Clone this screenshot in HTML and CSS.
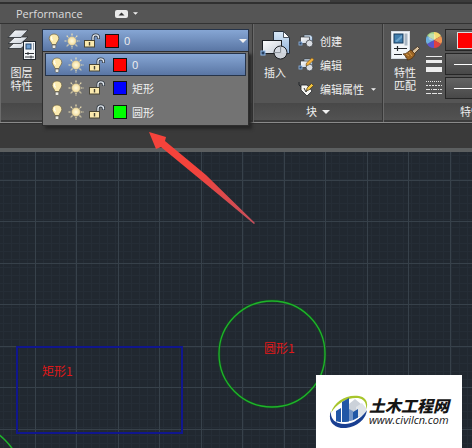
FILE: index.html
```html
<!DOCTYPE html>
<html lang="zh-CN">
<head>
<meta charset="utf-8">
<meta name="viewport" content="width=device-width, initial-scale=1">
<title>图层特性</title>
<link rel="stylesheet" href="styles.css">
</head>
<body>
<svg class="defs" aria-hidden="true">
  <defs>
    <linearGradient id="paper" x1="0" y1="0" x2="1" y2="1"><stop offset="0" stop-color="#fff"/><stop offset="1" stop-color="#c3cbd6"/></linearGradient>
    <linearGradient id="sheet" x1="0" y1="0" x2="0" y2="1"><stop offset="0" stop-color="#d9e9f8"/><stop offset="1" stop-color="#8fb2da"/></linearGradient>
    <radialGradient id="glow"><stop offset="0" stop-color="#fffbe0"/><stop offset="1" stop-color="#f3dc9c"/></radialGradient>
  </defs>
  <symbol id="bulb" viewBox="0 0 12 16">
    <path d="M6 1C3 1 1.200 3 1.200 5.500c0 2.200 2.300 3.500 2.800 6h4c.5-2.500 2.800-3.800 2.800-6C10.800 3 9 1 6 1z" fill="#fbeaae" stroke="#6b6245" stroke-width=".7"/>
    <path d="M4 3.500c-1 1-.8 2.500.6 4" fill="none" stroke="#fffef0" stroke-width="1.300"/>
    <path d="M4.200 12h3.600v2.200L7 15.500H5l-.8-1.300z" fill="#e8e8e2" stroke="#55534a" stroke-width=".6"/>
  </symbol>
  <symbol id="sun" viewBox="0 0 16 16">
    <path d="M8 .5v2.500M8 13v2.500M.5 8H3M13 8h2.500M2.700 2.700l1.800 1.800M11.500 11.500l1.800 1.800M13.300 2.700l-1.800 1.800M4.500 11.500l-1.800 1.800" stroke="#f0e2b4" stroke-width="1.200" stroke-dasharray="1.500 .5"/>
    <circle cx="8" cy="8" r="4.200" fill="url(#glow)" stroke="#c9b98b" stroke-width=".5"/>
  </symbol>
  <symbol id="lock" viewBox="0 0 16 16">
    <path d="M9 8V4.500C9 1 14.500 1 14.500 4.500V6" fill="none" stroke="#313a44" stroke-width="3"/>
    <path d="M9 8V4.500C9 1 14.500 1 14.500 4.500V5.500" fill="none" stroke="#e4eaf0" stroke-width="1.400"/>
    <rect x=".5" y="7.500" width="10" height="6.500" fill="#fbeaae" stroke="#4a4636"/>
    <path d="M5.500 9v3.500" stroke="#4a4636" stroke-width="1.400"/>
  </symbol>
  <symbol id="caret" viewBox="0 0 8 4"><path d="M0 0h8L4 4z" fill="#f0f0f0"/></symbol>
  <symbol id="blocks" viewBox="0 0 16 16">
    <path d="M6 2h6.500l2 2v6H6z" fill="url(#sheet)" stroke="#333c48" stroke-width=".6"/>
    <rect x="2.500" y="4" width="9" height="6.500" fill="url(#paper)" stroke="#303338" stroke-width=".7"/>
    <rect x="1" y="9" width="3" height="3" fill="#314b6e" stroke="#91b8e6" stroke-width=".8"/>
    <circle cx="11.500" cy="10.500" r="3.400" fill="#d9dde3" stroke="#303338" stroke-width=".7"/>
  </symbol>
</svg>

<div class="strip"></div>
<nav class="tabs">
  <a class="tab" href="#performance">Performance</a>
  <button class="minimize" type="button" aria-label="最小化功能区">
    <svg width="13" height="8" viewBox="0 0 13 8"><rect width="13" height="8" rx="2" fill="#e9e9e9"/><path d="M3.500 5.500h6l-3-3z" fill="#333"/></svg>
    <svg width="5" height="3"><use href="#caret"/></svg>
  </button>
</nav>

<main class="ribbon">
  <section class="panel layers">
    <div class="tools">
      <button class="big" type="button">
        <svg width="30" height="32" viewBox="0 0 30 32">
          <g stroke="#2b2f34" stroke-width=".8" fill="url(#paper)">
            <path d="M1 19.500 8 13h13l-7 6.500z"/><path d="M1 14.500 8 8h13l-7 6.500z"/><path d="M1 8.500 8 1h13l-7 7.500z" />
          </g>
          <rect x="16.500" y="12.500" width="12" height="18" fill="#f2f5f8" stroke="#20262d"/>
          <rect x="19" y="15" width="5" height="5" fill="#6f9fd2" stroke="#28486c"/>
          <path d="M26.500 14v7" stroke="#8a97a5"/>
          <path d="M18 24.500h9M18 28h9M21 23v3M24 26.500v3" stroke="#2c3036"/>
        </svg>
        <span>图层<br>特性</span>
      </button>
      <div class="picker">
        <button class="current" type="button" aria-haspopup="listbox" aria-expanded="true">
          <svg width="12" height="16"><use href="#bulb"/></svg>
          <svg width="16" height="16"><use href="#sun"/></svg>
          <svg width="16" height="16"><use href="#lock"/></svg>
          <i class="swatch red"></i><span>0</span>
          <svg class="drop" width="8" height="4"><use href="#caret"/></svg>
        </button>
        <ul class="menu" role="listbox" aria-label="图层">
          <li class="layer selected" role="option" aria-selected="true">
            <svg width="12" height="16"><use href="#bulb"/></svg>
            <svg width="16" height="16"><use href="#sun"/></svg>
            <svg width="16" height="16"><use href="#lock"/></svg>
            <i class="swatch red"></i><span>0</span>
          </li>
          <li class="layer" role="option" aria-selected="false">
            <svg width="12" height="16"><use href="#bulb"/></svg>
            <svg width="16" height="16"><use href="#sun"/></svg>
            <svg width="16" height="16"><use href="#lock"/></svg>
            <i class="swatch blue"></i><span>矩形</span>
          </li>
          <li class="layer" role="option" aria-selected="false">
            <svg width="12" height="16"><use href="#bulb"/></svg>
            <svg width="16" height="16"><use href="#sun"/></svg>
            <svg width="16" height="16"><use href="#lock"/></svg>
            <i class="swatch green"></i><span>圆形</span>
          </li>
        </ul>
      </div>
    </div>
    <div class="title"></div>
  </section>

  <section class="panel block">
    <div class="tools">
      <button class="big" type="button">
        <svg width="30" height="32" viewBox="0 0 30 32">
          <path d="M13.500 2.500h10l6 6v16h-16z" fill="url(#sheet)" stroke="#26303d"/>
          <path d="M23.500 2.500v6h6z" fill="#fff" stroke="#26303d" stroke-width=".8"/>
          <rect x="2.500" y="11.500" width="19" height="13" fill="url(#paper)" stroke="#1d2024"/>
          <rect x="1" y="22" width="4" height="4" fill="#29405f" stroke="#8fb9ea"/>
          <circle cx="20.500" cy="23.500" r="6.500" fill="#d5dae1" fill-opacity=".95" stroke="#1d2024"/>
          <path d="M20.500 17.500v6H14.500" fill="none" stroke="#8f979f"/>
        </svg>
        <span>插入</span>
      </button>
      <div class="commands">
        <button type="button"><svg width="16" height="16"><use href="#blocks"/></svg>创建</button>
        <button type="button">
          <svg width="16" height="16"><use href="#blocks"/><path d="M8.500 6 14 .8l2 2L10.500 8l-2.500.5z" fill="#f2b23e" stroke="#6d4914" stroke-width=".6"/></svg>编辑</button>
        <button type="button">
          <svg width="16" height="16" viewBox="0 0 16 16"><path d="M1 1v3l2 2" stroke="#22262b" fill="none"/><path d="M3 4h6l5 6-5 5-6-6z" fill="#f5f5f2" stroke="#24272b" stroke-width=".8"/><path d="M6 7l2 4 2-3" fill="none" stroke="#333"/><path d="m9 7 4.500-4.500 2 2L11 9l-2.500.5z" fill="#f2c43e" stroke="#46351a" stroke-width=".7"/></svg>编辑属性
          <svg class="more" width="5" height="3"><use href="#caret"/></svg></button>
      </div>
    </div>
    <button class="title" type="button">块<svg width="8" height="4"><use href="#caret"/></svg></button>
  </section>

  <section class="panel properties">
    <div class="tools">
      <button class="big" type="button">
        <svg width="30" height="32" viewBox="0 0 30 32">
          <rect x="1.500" y="2.500" width="18" height="27" fill="#f3f6f9" stroke="#d5dbe2"/>
          <rect x="4" y="5" width="9" height="9" fill="#427fae" stroke="#173a5c"/>
          <path d="M5 12 12 6v3l-5 4z" fill="#6ca4cc"/>
          <rect x="14.500" y="4.500" width="3" height="12" fill="#a9b6c3"/>
          <path d="M4 19.500h13M4 25.500h8M7.500 17v5" stroke="#25292e" stroke-width="1.200"/>
          <path d="m22 22 5.500-4.500 2 2L24 25z" fill="#d9c2a0" stroke="#3f2c1b" stroke-width=".8"/>
          <path d="M13 25c4 0 5-3 8-4l4 4c-1 3-4 6-8 6 1-1 0-2-1-2 0-1-1-3-3-4z" fill="#9b6424" stroke="#4a2d10" stroke-width=".7"/>
          <path d="m16 25 3 2m0-4 3 4" stroke="#d69b4a"/>
        </svg>
        <span>特性<br>匹配</span>
      </button>
      <div class="settings">
        <svg width="16" height="16" viewBox="-8 -8 16 16" aria-hidden="true">
          <path d="M0 0-7-4A8 8 0 0 1 0-8z" fill="#9ccf83"/><path d="M0 0V-8A8 8 0 0 1 7-4z" fill="#f3db70"/><path d="M0 0 7-4A8 8 0 0 1 7 4z" fill="#f09552"/><path d="M0 0 7 4A8 8 0 0 1 0 8z" fill="#df4141"/><path d="M0 0V8A8 8 0 0 1-7 4z" fill="#5a54cb"/><path d="M0 0-7 4A8 8 0 0 1-7-4z" fill="#6cb0e0"/><circle cx="-2" cy="-3" r="3.500" fill="#fff" opacity=".35"/>
        </svg>
        <button class="field" type="button" aria-label="对象颜色"><i class="color"></i></button>
        <svg width="16" height="18" viewBox="0 0 16 18" aria-hidden="true"><path d="M0 1h16v1H0zM0 5h16v3H0zM0 12h16v5H0z" fill="#ededed"/></svg>
        <button class="field" type="button" aria-label="线宽"><i class="line"></i></button>
        <svg width="16" height="16" viewBox="0 0 16 16" aria-hidden="true"><g stroke="#e4e4e4"><path d="M0 1.500h16" stroke-dasharray="1 1"/><path d="M0 5.500h16" stroke-dasharray="2 1"/><path d="M0 9.500h16" stroke-dasharray="4 1 1 1"/><path d="M0 13.500h16" stroke-dasharray="5 1"/></g></svg>
        <button class="field" type="button" aria-label="线型"><i class="line"></i></button>
      </div>
    </div>
    <button class="title" type="button">特性</button>
  </section>
</main>

<div class="gap"></div>

<section class="canvas">
  <svg class="drawing" width="100%" height="100%">
    <defs>
      <pattern id="minor" width="8" height="8" patternUnits="userSpaceOnUse"><path d="M3.500 0v8M0 3.500h8" stroke="#252d36"/></pattern>
      <pattern id="major" width="83" height="83" patternUnits="userSpaceOnUse"><path d="M35.500 0v83M76.500 0v83M0 28.500h83M0 69.500h83" stroke="#37414a"/></pattern>
    </defs>
    <rect width="100%" height="100%" fill="url(#minor)"/>
    <rect width="100%" height="100%" fill="url(#major)"/>
    <rect x="17" y="195" width="165" height="86" fill="none" stroke="#10168e" stroke-width="2"/>
    <circle cx="272" cy="202" r="53" fill="none" stroke="#0b5a18" stroke-width="3" opacity=".5"/>
    <circle cx="272" cy="202" r="53" fill="none" stroke="#1fb42a" stroke-width="1.300"/>
    <circle cx="-41" cy="334" r="65" fill="none" stroke="#1fb42a" stroke-width="1.500"/>
    <text x="42" y="224">矩形1</text>
    <text x="264" y="201">圆形1</text>
  </svg>
  <aside class="brand">
    <svg width="40" height="34" viewBox="0 0 40 34" aria-hidden="true">
      <path d="M2 18C5 6 18-1 30 1c7 1 10 7 7 14 1-7-2-11-8-12C19 2 8 8 2 18z" fill="#a8c62c"/>
      <path d="M20 9l6-5 6 5v13H20z" fill="#cbd1d9"/><path d="M27 12l6-4 4 5v8H27z" fill="#dfe3e8"/>
      <path d="M7 16l5-3v14H7zM13 7l7-4v24h-7zM24 17l5-3v10l-5 2z" fill="#2157a6"/><path d="M20 14l4 2v10h-4z" fill="#7495c6"/>
      <path d="M2 16c-1 9 6 14 15 12 9-1 17-6 21-13-1 9-10 17-21 18C5 34-2 26 2 16z" fill="#193f91"/>
      <path d="M5 25c9 5 20 1 28-5-6 8-18 13-28 5z" fill="#fff"/>
    </svg>
    <p><strong>土木工程网</strong><span>www.civilcn.com</span></p>
  </aside>
</section>

<svg class="pointer" width="108" height="94" viewBox="0 0 108 94" aria-hidden="true">
  <defs><linearGradient id="shaft" x1="0" y1="0" x2="1" y2="1"><stop offset=".4" stop-color="#f5433b"/><stop offset="1" stop-color="#c4505c"/></linearGradient></defs>
  <path d="M1 1 18 6 17 10 58 44 107 92 106 93 53 49 13 16 8 18z" fill="url(#shaft)"/>
</svg>
</body>
</html>
```

FILE: styles.css
```css
* { box-sizing: border-box; }

body {
  position: relative;
  display: flex;
  flex-direction: column;
  min-height: 100vh;
  margin: 0;
  overflow: hidden;
  background: #3a3a3a;
  color: #f0f0f0;
  font: 11px/13px "Open Sans", "Noto Sans CJK SC", sans-serif;
}

button {
  padding: 0;
  border: 0;
  background: none;
  color: inherit;
  font: inherit;
}

svg { display: block; flex: none; }

.defs { position: absolute; width: 0; height: 0; }

.strip {
  height: 4px;
  background: linear-gradient(90deg, #5a5a5a 70%, #3c3c3c 70%);
  border-bottom: 2px solid #303030;
}

.tabs {
  display: flex;
  align-items: center;
  gap: 32px;
  height: 20px;
  padding: 0 16px;
  background: #555;
  border-bottom: 1px solid #333;
}

.tab { color: #dcdcdc; text-decoration: none; }

.minimize { display: flex; align-items: center; gap: 5px; }

.ribbon {
  display: flex;
  height: 99px;
  background: #555;
  border-bottom: 1px solid #8a8a8a;
}

.panel {
  display: flex;
  flex-direction: column;
  flex: none;
  border-right: 1px solid #383838;
  border-left: 1px solid #6a6a6a;
}

.layers { width: 253px; }
.block { width: 130px; }
.properties { flex: 1; min-width: 0; overflow: hidden; border-right: 0; }

.tools { display: flex; height: 79px; padding-top: 5px; }

.title {
  display: flex;
  align-items: center;
  justify-content: center;
  gap: 5px;
  flex: 1;
  background: linear-gradient(#484848, #525252);
  border-bottom: 2px solid #3c3c3c;
}

.properties .title { justify-content: flex-start; padding-left: 76px; white-space: nowrap; }

.big {
  display: flex;
  flex-direction: column;
  align-items: center;
  gap: 5px;
  flex: none;
  width: 42px;
}

.layers .big { width: 41px; }

.picker { position: relative; width: 207px; }

.current,
.layer {
  display: flex;
  align-items: center;
  background: linear-gradient(#86a6d4, #5a76a4);
  border: 1px solid #26344a;
}

.current { width: 100%; height: 23px; padding-left: 5px; }

.current svg + svg { margin-left: 4px; }

.swatch {
  width: 14px;
  height: 14px;
  margin: 0 5px;
  border: 1px solid #111;
}

.current .drop { margin: 0 1px 0 auto; }

.red { background: #f00; }
.blue { background: #00f; }
.green { background: #0f0; }

.menu {
  position: absolute;
  top: 22px;
  left: 0;
  z-index: 2;
  width: 100%;
  margin: 0;
  padding: 1px 2px;
  background: #737373;
  border: 1px solid #2e2e2e;
  box-shadow: 3px 3px 3px #262626;
  list-style: none;
}

.layer {
  height: 24px;
  padding-left: 5px;
  background: none;
  border-color: transparent;
}

.layer svg + svg { margin-left: 5px; }
.layer .swatch { margin-left: 8px; }

.selected {
  height: 23px;
  background: linear-gradient(#86a6d4, #5a76a4);
  border-color: #26344a;
}

.commands { display: flex; flex-direction: column; margin-left: 2px; }

.commands button { display: flex; align-items: center; gap: 6px; height: 24px; }

.commands .more { margin-left: 1px; }

.settings {
  display: grid;
  grid-template-columns: 16px 1fr;
  grid-auto-rows: 22px;
  gap: 2px 3px;
  align-items: center;
  flex: 1;
  align-content: start;
}

.field {
  display: flex;
  align-items: center;
  height: 22px;
  padding-left: 8px;
  background: linear-gradient(#646464, #484848);
  border: 1px solid #262626;
  border-right: 0;
}

.color { width: 100%; height: 17px; margin-left: 3px; background: #f00; border: 1px solid #ddd; border-right: 0; }
.line { width: 100%; height: 1px; background: #fff; }

.gap { height: 29px; border-top: 1px solid #303030; border-bottom: 4px solid #5c5f60; }

.canvas { position: relative; flex: 1; background: #212830; }

.drawing { position: absolute; inset: 0; }

.drawing text {
  fill: #e01818;
  font: 12px "Noto Sans CJK SC", sans-serif;
}

.brand {
  position: absolute;
  right: 10px;
  bottom: 0;
  display: flex;
  align-items: center;
  width: 146px;
  height: 73px;
  padding-left: 13px;
  background: #fff;
  color: #151515;
}

.brand p { margin: 0; font-style: italic; }

.brand strong {
  display: block;
  font: italic 900 16px/16px "Noto Sans CJK SC", sans-serif;
}

.brand span { display: block; font: italic 11px/13px "Open Sans", sans-serif; }

.pointer { position: absolute; top: 131px; left: 148px; z-index: 3; }
```
